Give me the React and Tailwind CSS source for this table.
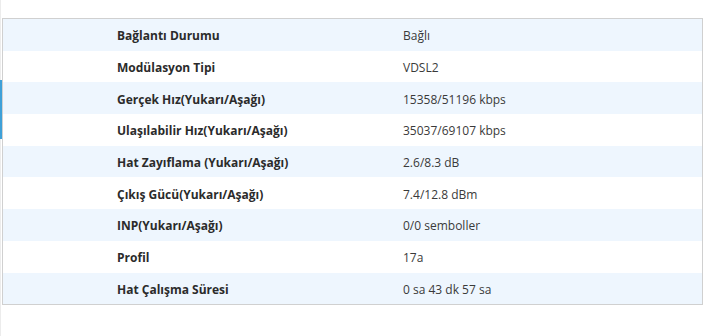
const rows = [
  ["Bağlantı Durumu", "Bağlı"],
  ["Modülasyon Tipi", "VDSL2"],
  ["Gerçek Hız(Yukarı/Aşağı)", "15358/51196 kbps"],
  ["Ulaşılabilir Hız(Yukarı/Aşağı)", "35037/69107 kbps"],
  ["Hat Zayıflama (Yukarı/Aşağı)", "2.6/8.3 dB"],
  ["Çıkış Gücü(Yukarı/Aşağı)", "7.4/12.8 dBm"],
  ["INP(Yukarı/Aşağı)", "0/0 semboller"],
  ["Profil", "17a"],
  ["Hat Çalışma Süresi", "0 sa 43 dk 57 sa"],
];

export default function App() {
  return (
    <div
      className="relative h-[336px] w-[723px] bg-white border-l border-[#ececec] text-[12px] text-[#333]"
      style={{ fontFamily: '"Open Sans", "Noto Sans", sans-serif' }}
    >
      <div className="absolute left-[-1px] top-[80px] h-[59px] w-[2px] bg-[#3ea0d8]"></div>
      <div className="pt-[18px] pl-[1px] w-[702px]">
        <div className="border border-[#d0d0d0]">
          {rows.map(([label, value], i) => (
            <div
              key={label}
              className={`flex h-[31.7px] items-center pt-[3px] ${
                i % 2 === 0 ? "bg-[#eef6fe]" : "bg-white"
              }`}
            >
              <div className="w-[400px] pl-[114px] font-bold text-[#2b2b2b]">{label}</div>
              <div className="text-[12px] text-[#3a3a3a]">{value}</div>
            </div>
          ))}
        </div>
      </div>
    </div>
  );
}
